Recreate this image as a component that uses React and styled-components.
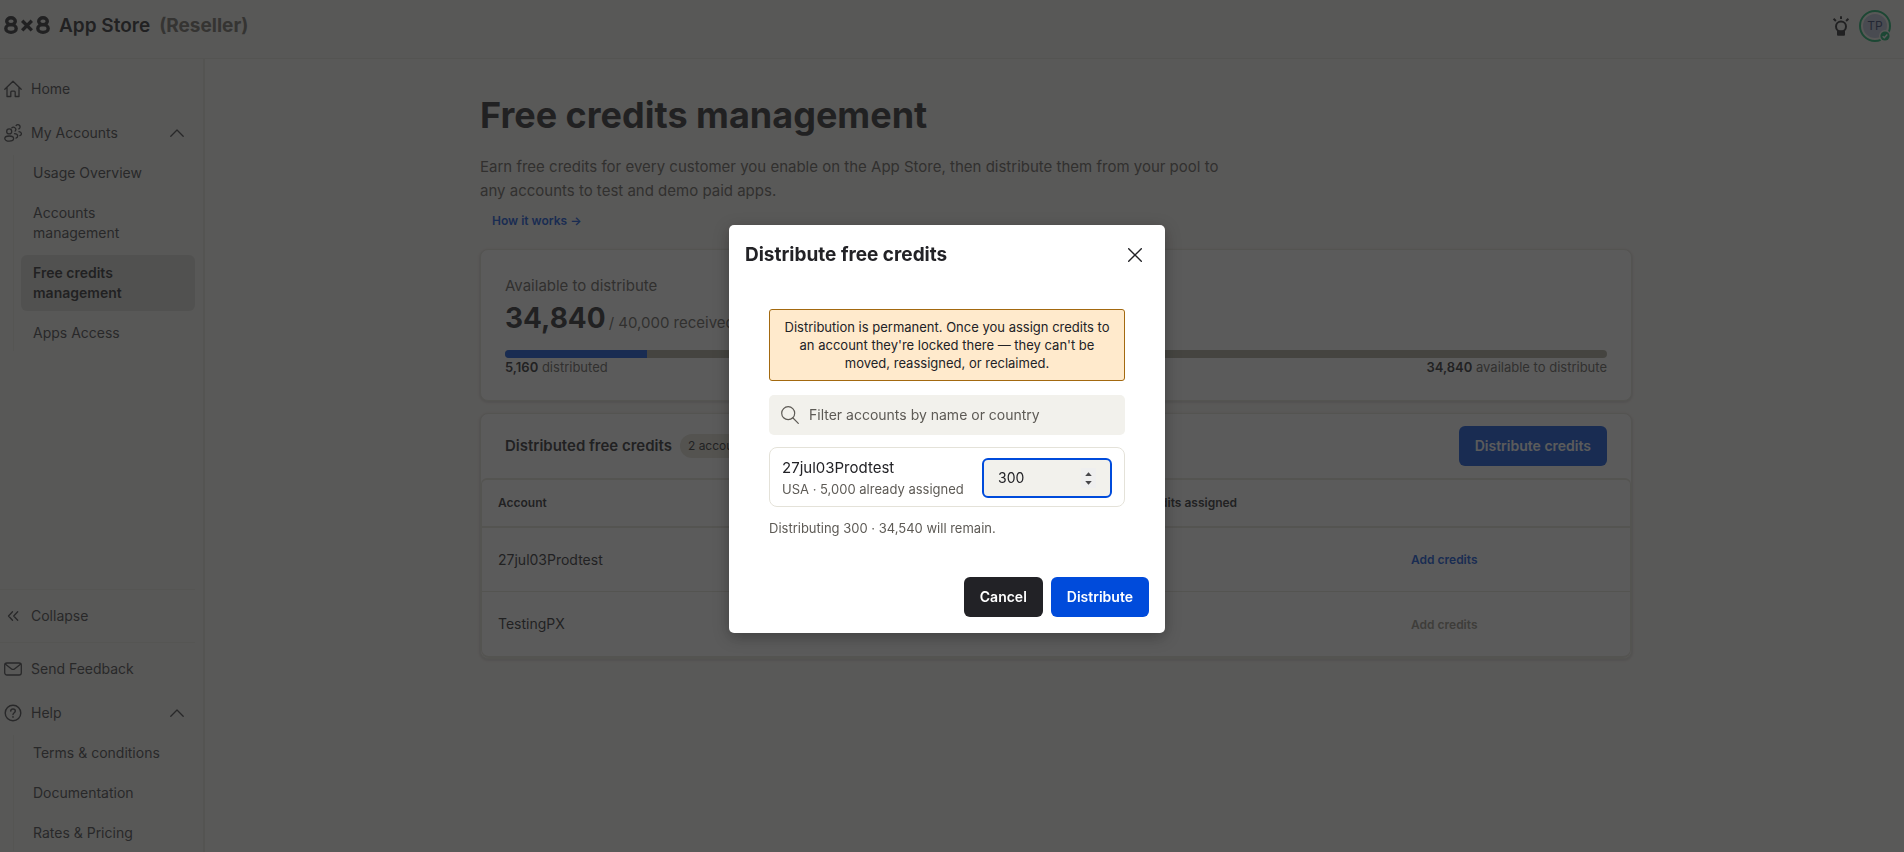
import React, { useId } from "react";
import styled, { createGlobalStyle, css } from "styled-components";

const ink = "#222226";
const muted = "#5d5a55";
const blue = "#004bdb";
const line = "#e4e2d9";

const GlobalStyle = createGlobalStyle`
  *, *::before, *::after { box-sizing: border-box; }
  html, body, #root { height: 100%; }
  body {
    margin: 0;
    overflow: hidden;
    background: #f8f5f1;
    color: ${ink};
    font-family: Inter, "Liberation Sans", sans-serif;
    font-size: 14px;
    line-height: 20px;
  }
  button, input { font: inherit; color: inherit; }
  h1, h2, p { margin: 0; }
  a { color: inherit; text-decoration: none; }
  ul { list-style: none; margin: 0; padding: 0; }
`;

const Shell = styled.div`
  display: flex;
  flex-direction: column;
  height: 100%;
`;

const Header = styled.header`
  display: flex;
  align-items: flex-start;
  justify-content: space-between;
  flex: none;
  height: 59px;
  padding: 10px 13px 0 4px;
  background: #f2f2ee;
  border-bottom: 1px solid #e2e2dc;
`;

const Brand = styled.div`
  display: flex;
  align-items: center;
  gap: 9px;
  height: 32px;
  font-size: 19px;
  font-weight: 600;
  color: ${ink};
`;

const Logo = styled.svg`
  display: block;
  width: 46px;
  height: 20px;
`;

const Audience = styled.span`
  color: #6b6862;
  font-weight: 700;
`;

const HeaderTools = styled.div`
  display: flex;
  align-items: center;
  gap: 8px;
`;

const IconButton = styled.button`
  display: grid;
  place-items: center;
  width: ${(p) => p.$size}px;
  height: ${(p) => p.$size}px;
  padding: 0;
  border: 0;
  background: none;
  cursor: pointer;
`;

const Avatar = styled.button`
  position: relative;
  display: grid;
  place-items: center;
  width: 32px;
  height: 32px;
  padding: 2px;
  border: 2px solid #0fb068;
  border-radius: 50%;
  background: none;
`;

const Initials = styled.span`
  display: grid;
  place-items: center;
  width: 24px;
  height: 24px;
  border-radius: 50%;
  background: #b8c2d8;
  color: #2a3868;
  font-size: 12px;
`;

const Presence = styled.svg`
  position: absolute;
  right: -2px;
  bottom: -2px;
  width: 12px;
  height: 12px;
`;

const Columns = styled.div`
  display: flex;
  flex: 1;
  min-height: 0;
`;

const Sidebar = styled.nav`
  display: flex;
  flex-direction: column;
  flex: none;
  width: 205px;
  padding: 8px 8px 1px 0;
  background: #f2f2ee;
  border-right: 2px solid #e4e3dc;
  overflow: hidden;
`;

const NavItem = styled.a`
  display: flex;
  align-items: center;
  gap: 9px;
  height: 44px;
  padding: 0 11px 0 4px;
  color: #3a3a3e;

  svg { display: block; flex: none; }
`;

const NavLabel = styled.span`
  flex: 1;
`;

const SubList = styled.ul`
  display: flex;
  flex-direction: column;
  gap: 4px;
  margin-left: 13px;
  padding-left: 7px;
  border-left: 1px solid #e6e6e0;
`;

const SubLink = styled.a`
  display: block;
  padding: 8px 28px 8px 12px;
  border-radius: 6px;
  color: #3a3a3e;
  ${(p) =>
    p.$active &&
    css`
      background: #d9d9d4;
      color: ${ink};
      font-weight: 600;
    `}
`;

const NavBottom = styled.div`
  display: flex;
  flex-direction: column;
  flex: none;
  margin-top: auto;
`;

const CollapseBar = styled.div`
  display: flex;
  flex-direction: column;
  padding: 4px 0;
  border-top: 1px solid #e6e6e0;
  border-bottom: 1px solid #e6e6e0;
  margin-bottom: 4px;
`;

const Main = styled.main`
  flex: 1;
  min-width: 0;
  padding: 32px 24px 0 27px;
  overflow: hidden;
`;

const Content = styled.div`
  display: flex;
  flex-direction: column;
  max-width: 1152px;
  margin: 0 auto;
`;

const PageTitle = styled.h1`
  font-size: 36px;
  line-height: 48px;
  font-weight: 700;
`;

const Lead = styled.p`
  max-width: 760px;
  margin-top: 16px;
  font-size: 15px;
  line-height: 24px;
  color: ${muted};
`;

const TextLink = styled.a`
  align-self: flex-start;
  margin: 8px 0 18px 12px;
  font-size: 12px;
  line-height: 20px;
  font-weight: 600;
  color: ${blue};
`;

const Card = styled.section`
  border: 1px solid ${line};
  border-radius: 8px;
  background: #fff;
  box-shadow: 0 1px 2px 1px #2222261f;
`;

const BalanceCard = styled(Card)`
  display: flex;
  flex-direction: column;
  margin-bottom: 12px;
  padding: 24px;
`;

const BalanceLabel = styled.p`
  font-size: 15px;
  line-height: 24px;
  color: ${muted};
`;

const Balance = styled.p`
  display: flex;
  align-items: baseline;
  gap: 3px;
  height: 40px;
  font-size: 15px;
  line-height: 40px;
  color: ${muted};

  strong { font-size: 28px; font-weight: 700; color: ${ink}; }
`;

const Track = styled.div`
  height: 8px;
  margin-top: 12px;
  border-radius: 4px;
  background: #aaa898;
  overflow: hidden;
`;

const Fill = styled.div`
  height: 100%;
  background: ${blue};
`;

const Split = styled.div`
  display: flex;
  justify-content: space-between;
  font-size: 13px;
  line-height: 18px;
  color: ${muted};

  strong { font-weight: 600; color: ${ink}; }
`;

const CardHead = styled.div`
  display: flex;
  align-items: center;
  gap: 8px;
  padding: 12px 24px;
`;

const CardTitle = styled.h2`
  font-size: 15px;
  line-height: 24px;
  font-weight: 600;
`;

const Pill = styled.span`
  padding: 2px 8px;
  border-radius: 12px;
  background: #e2e0d4;
  font-size: 12px;
`;

const Button = styled.button`
  height: 40px;
  padding: 0 16px;
  border: 0;
  border-radius: 6px;
  background: ${(p) => (p.$dark ? ink : blue)};
  color: #fff;
  font-weight: 600;
  cursor: pointer;
`;

const CardHeadButton = styled(Button)`
  margin-left: auto;
`;

const Table = styled.table`
  width: 100%;
  table-layout: fixed;
  border-collapse: separate;
  border-spacing: 0;
  border: 1px solid ${line};
  border-block-width: 2px;
  border-radius: 6px 6px 8px 8px;
  text-align: left;
`;

const HeadCell = styled.th`
  width: ${(p) => (p.$width ? `${p.$width}px` : "auto")};
  height: 48px;
  padding: 0 16px;
  border-bottom: 2px solid ${line};
  font-size: 12px;
  font-weight: 600;
`;

const Cell = styled.td`
  height: 64px;
  padding: 0 16px;
  border-bottom: ${(p) => (p.$last ? 0 : 1)}px solid ${line};
`;

const RowAction = styled.button`
  padding: 0 12px;
  border: 0;
  background: none;
  color: ${blue};
  font-size: 12px;
  font-weight: 600;
  &:disabled { color: #8f8c80; }
`;

const Overlay = styled.div`
  position: fixed;
  inset: 0;
  display: flex;
  align-items: center;
  justify-content: center;
  padding: 6px 10px 0 0;
  background: rgba(34, 34, 34, 0.74);
`;

const Dialog = styled.div`
  display: flex;
  flex-direction: column;
  width: 436px;
  max-width: 100%;
  border-radius: 5px;
  background: #fff;
  box-shadow: 0 4px 16px rgba(0, 0, 0, 0.3);
`;

const DialogHead = styled.div`
  display: flex;
  align-items: center;
  justify-content: space-between;
  padding: 10px 10px 10px 16px;
`;

const DialogTitle = styled.h2`
  font-size: 19px;
  line-height: 24px;
  font-weight: 700;
`;

const DialogBody = styled.div`
  display: flex;
  flex-direction: column;
  padding: 24px 40px 40px;
`;

const Notice = styled.p`
  padding: 8px 12px;
  border: 1px solid #a3690f;
  border-radius: 3px;
  background: #ffeacc;
  font-size: 13px;
  line-height: 18px;
  text-align: center;
`;

const SearchBox = styled.label`
  display: flex;
  align-items: center;
  gap: 10px;
  height: 40px;
  margin: 14px 0 12px;
  padding: 0 12px;
  border-radius: 5px;
  background: #f2f1ec;
  color: ${muted};

  svg { flex: none; }
  input {
    flex: 1;
    min-width: 0;
    padding: 0;
    border: 0;
    outline: 0;
    background: none;
  }
  input::placeholder { color: ${muted}; opacity: 1; }
`;

const AccountRow = styled.div`
  display: flex;
  align-items: center;
  justify-content: space-between;
  height: 60px;
  padding: 2px 12px 0;
  border: 1px solid ${line};
  border-radius: 8px;
`;

const AccountText = styled.label`
  display: flex;
  flex-direction: column;
  padding-bottom: 2px;
  font-size: 15px;
  line-height: 24px;
`;

const Small = styled.span`
  font-size: 13px;
  line-height: 18px;
  color: ${muted};
`;

const AmountBox = styled.div`
  display: flex;
  align-items: center;
  width: 130px;
  height: 40px;
  padding: 0 14px;
  border: 2px solid ${blue};
  border-radius: 6px;
  background: #f2f1ec;

  input {
    flex: 1;
    min-width: 0;
    padding: 0;
    border: 0;
    outline: 0;
    background: none;
    appearance: textfield;
  }
  input::-webkit-inner-spin-button { display: none; }
`;

const Stepper = styled.svg`
  flex: none;
  width: 15px;
  height: 20px;
  background: #efefef;
`;

const Summary = styled(Small)`
  margin-top: 12px;
`;

const DialogFoot = styled.div`
  display: flex;
  justify-content: flex-end;
  gap: 8px;
  padding: 0 16px 16px;
`;

const stroke = { fill: "none", stroke: "currentColor", strokeLinecap: "round", strokeLinejoin: "round" };

const HomeIcon = () => (
  <svg width="18" height="18" viewBox="0 0 18 18" strokeWidth="1.3" {...stroke}>
    <path d="M.8 9.200 9 1.200l8.200 8M3 7.400V16.500h3.800v-4.300q0-1 1-1h2.400q1 0 1 1v4.300H15V7.400" />
  </svg>
);

const PeopleIcon = () => (
  <svg width="18" height="18" viewBox="0 0 18 18" strokeWidth="1.300" {...stroke}>
    <circle cx="5.200" cy="7.400" r="2.500" />
    <ellipse cx="5.200" cy="14.600" rx="4.400" ry="2.600" />
    <path d="M7.800 3.900a2.200 2.200 0 1 1 3.300 3.200M10.500 9.700c1.900.2 3.200 1.200 3.200 2.400 0 1-.7 1.700-1.700 2M12.100 1.600a2.200 2.200 0 1 1 2.700 3.300M15 7.700c1.500.2 2.400 1.100 2.400 2.100 0 .9-.6 1.600-1.500 1.900" />
  </svg>
);

const ChevronUp = () => (
  <svg width="14" height="8" viewBox="0 0 14 8" strokeWidth="1.300" {...stroke}>
    <path d="M.8 7.200 7 1l6.200 6.200" />
  </svg>
);

const CollapseIcon = () => (
  <svg width="18" height="18" viewBox="0 0 18 18" strokeWidth="1.300" {...stroke}>
    <path d="M8.500 4.800 4.500 9l4 4.200M13.700 4.800 9.700 9l4 4.200" />
  </svg>
);

const MailIcon = () => (
  <svg width="18" height="18" viewBox="0 0 18 18" strokeWidth="1.300" {...stroke}>
    <rect x=".7" y="3" width="16.600" height="12" rx="2.200" />
    <path d="m1.500 4.200 5.700 4.500q1.800 1.400 3.600 0l5.700-4.500" />
  </svg>
);

const HelpIcon = () => (
  <svg width="18" height="18" viewBox="0 0 18 18" strokeWidth="1.400" {...stroke}>
    <circle cx="9" cy="9" r="7.800" />
    <path d="M6.700 7.100c.1-1.300 1-2.100 2.300-2.100s2.300.8 2.300 2c0 1.700-2.300 1.700-2.300 3.600" />
    <path d="M9 12.900v.1" strokeWidth="1.700" />
  </svg>
);

const BulbIcon = () => (
  <svg width="18" height="20" viewBox="0 0 18 20" fill="none" stroke="currentColor">
    <circle cx="9" cy="10.500" r="5" strokeWidth="2" />
    <path d="M9 .3v2.700M1.600 2.800l2.300 2.200M16.400 2.800 14.100 5" strokeWidth="2" />
    <path d="M5 14.500h8v4.300q0 1-1 1H6q-1 0-1-1z" fill="currentColor" stroke="none" />
  </svg>
);

const CloseIcon = () => (
  <svg width="14" height="14" viewBox="0 0 14 14" strokeWidth="1.400" {...stroke}>
    <path d="m.7.7 12.600 12.600M13.300.7.7 13.300" />
  </svg>
);

const SearchIcon = () => (
  <svg width="18" height="18" viewBox="0 0 18 18" strokeWidth="1.200" {...stroke}>
    <circle cx="7.200" cy="7.200" r="6.500" />
    <path d="m12 12 5.300 5.300" />
  </svg>
);

const accounts = [
  { name: "27jul03Prodtest", assigned: "5,000", open: true },
  { name: "TestingPX", assigned: "160", open: false },
];

function SideNav() {
  return (
    <Sidebar aria-label="Main">
      <NavItem href="#home"><HomeIcon /><NavLabel>Home</NavLabel></NavItem>
      <NavItem href="#accounts"><PeopleIcon /><NavLabel>My Accounts</NavLabel><ChevronUp /></NavItem>
      <SubList>
        <li><SubLink href="#usage">Usage Overview</SubLink></li>
        <li><SubLink href="#manage">Accounts management</SubLink></li>
        <li><SubLink href="#credits" $active aria-current="page">Free credits management</SubLink></li>
        <li><SubLink href="#access">Apps Access</SubLink></li>
      </SubList>
      <NavBottom>
        <CollapseBar>
          <NavItem href="#collapse"><CollapseIcon /><NavLabel>Collapse</NavLabel></NavItem>
        </CollapseBar>
        <NavItem href="#feedback"><MailIcon /><NavLabel>Send Feedback</NavLabel></NavItem>
        <NavItem href="#help"><HelpIcon /><NavLabel>Help</NavLabel><ChevronUp /></NavItem>
        <SubList>
          <li><SubLink href="#terms">Terms &amp; conditions</SubLink></li>
          <li><SubLink href="#docs">Documentation</SubLink></li>
          <li><SubLink href="#rates">Rates &amp; Pricing</SubLink></li>
        </SubList>
      </NavBottom>
    </Sidebar>
  );
}

function DistributeDialog() {
  const id = useId();
  return (
    <Overlay>
      <Dialog role="dialog" aria-modal="true" aria-labelledby={id + "t"}>
        <DialogHead>
          <DialogTitle id={id + "t"}>Distribute free credits</DialogTitle>
          <IconButton $size={40} aria-label="Close"><CloseIcon /></IconButton>
        </DialogHead>
        <DialogBody>
          <Notice>
            Distribution is permanent. Once you assign credits to an account they're locked there — they can't be moved, reassigned, or reclaimed.
          </Notice>
          <SearchBox>
            <SearchIcon />
            <input type="text" aria-label="Filter accounts" placeholder="Filter accounts by name or country" />
          </SearchBox>
          <AccountRow>
            <AccountText htmlFor={id + "a"}>
              27jul03Prodtest
              <Small>USA · 5,000 already assigned</Small>
            </AccountText>
            <AmountBox>
              <input id={id + "a"} type="number" defaultValue="300" />
              <Stepper viewBox="0 0 15 20" aria-hidden="true">
                <path d="M4.200 8 7.500 4.200 10.800 8zM4.200 13l3.300 3.800 3.300-3.800z" fill="#47474a" />
              </Stepper>
            </AmountBox>
          </AccountRow>
          <Summary>Distributing 300 · 34,540 will remain.</Summary>
        </DialogBody>
        <DialogFoot>
          <Button $dark>Cancel</Button>
          <Button>Distribute</Button>
        </DialogFoot>
      </Dialog>
    </Overlay>
  );
}

export default function App() {
  return (
    <>
      <GlobalStyle />
      <Shell>
        <Header>
          <Brand>
            <Logo viewBox="0 0 46 20" role="img" aria-label="8x8">
              <g fill="none" stroke="currentColor" strokeWidth="3.400">
                <ellipse cx="7" cy="5.200" rx="4.300" ry="3.400" />
                <ellipse cx="7" cy="12.500" rx="5.200" ry="3.900" />
                <ellipse cx="39" cy="5.200" rx="4.300" ry="3.400" />
                <ellipse cx="39" cy="12.500" rx="5.200" ry="3.900" />
                <path d="m18.200 4.800 9.600 9.600M27.800 4.800l-9.600 9.600" />
              </g>
            </Logo>
            <span>App Store</span>
            <Audience>(Reseller)</Audience>
          </Brand>
          <HeaderTools>
            <IconButton $size={20} aria-label="What's new"><BulbIcon /></IconButton>
            <Avatar aria-label="Profile">
              <Initials>TP</Initials>
              <Presence viewBox="0 0 12 12">
                <circle cx="6" cy="6" r="6" fill="#f2f2ee" />
                <circle cx="6" cy="6" r="4.600" fill="#0fb068" />
                <path d="m3.700 6.200 1.600 1.600 3-3.300" fill="none" stroke="#fff" strokeWidth="1.400" />
              </Presence>
            </Avatar>
          </HeaderTools>
        </Header>
        <Columns>
          <SideNav />
          <Main>
            <Content>
              <PageTitle>Free credits management</PageTitle>
              <Lead>
                Earn free credits for every customer you enable on the App Store, then distribute them from your pool to any accounts to test and demo paid apps.
              </Lead>
              <TextLink href="#how">How it works →</TextLink>
              <BalanceCard>
                <BalanceLabel>Available to distribute</BalanceLabel>
                <Balance><strong>34,840</strong> / 40,000 received</Balance>
                <Track><Fill style={{ width: `${(5160 / 40000) * 100}%` }} /></Track>
                <Split>
                  <span><strong>5,160</strong> distributed</span>
                  <span><strong>34,840</strong> available to distribute</span>
                </Split>
              </BalanceCard>
              <Card>
                <CardHead>
                  <CardTitle>Distributed free credits</CardTitle>
                  <Pill>2 accounts</Pill>
                  <CardHeadButton>Distribute credits</CardHeadButton>
                </CardHead>
                <Table>
                  <thead>
                    <tr>
                      <HeadCell>Account</HeadCell>
                      <HeadCell $width={286}>Free credits assigned</HeadCell>
                      <HeadCell $width={247} aria-label="Actions" />
                    </tr>
                  </thead>
                  <tbody>
                    {accounts.map((a, i) => {
                      const last = i === accounts.length - 1;
                      return (
                        <tr key={a.name}>
                          <Cell $last={last}>{a.name}</Cell>
                          <Cell $last={last}>{a.assigned}</Cell>
                          <Cell $last={last}>
                            <RowAction disabled={!a.open}>Add credits</RowAction>
                          </Cell>
                        </tr>
                      );
                    })}
                  </tbody>
                </Table>
              </Card>
            </Content>
          </Main>
        </Columns>
      </Shell>
      <DistributeDialog />
    </>
  );
}
